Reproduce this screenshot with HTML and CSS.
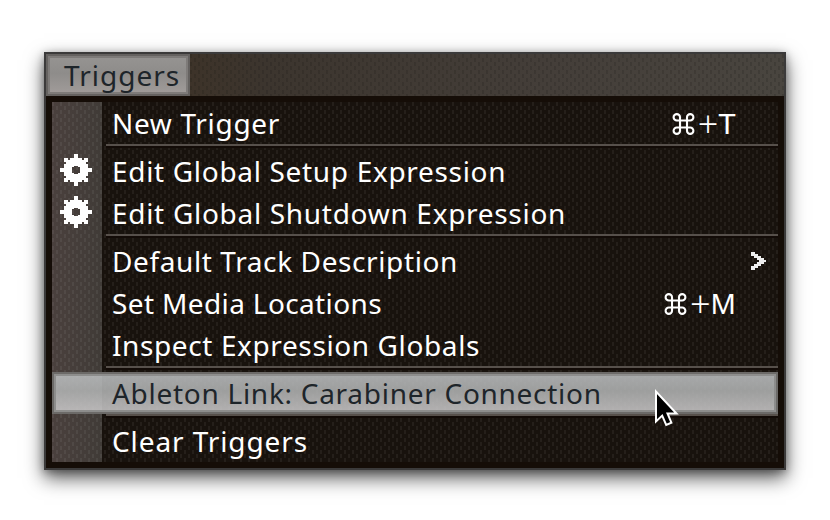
FILE: index.html
```html
<!DOCTYPE html>
<html lang="en">
<head>
<meta charset="utf-8">
<title>Triggers</title>
<link rel="stylesheet" href="styles.css">
</head>
<body>
<svg class="defs" width="0" height="0" aria-hidden="true">
  <symbol id="gear" viewBox="0 0 32 32">
    <path fill="#fff" fill-rule="evenodd" d="M14 0h4v4h4v2h2V4h4v4h-2v2h2v4h4v4h-4v4h-2v2h2v4h-4v-2h-2v2h-4v4h-4v-4h-4v-2H8v2H4v-4h2v-2H4v-4H0v-4h4v-4h2V8H4V4h4v2h2V4h4zM14 12v1h-2v6h2v1h4v-1h2v-6h-2v-1z"/>
  </symbol>
</svg>
<main class="window">
  <header class="bar"><div class="tab"><span class="tab-text">Triggers</span></div></header>
  <div class="menu">
    <div class="row"><span class="label l1">New Trigger</span><span class="key"><svg class="cmd" viewBox="0 0 22 22"><path d="M7.500 7.500V4.300a3.200 3.200 0 1 0-3.200 3.200h13.400a3.200 3.200 0 1 0-3.200-3.200v13.400a3.200 3.200 0 1 0 3.200-3.200H4.300a3.200 3.200 0 1 0 3.200 3.200z"/></svg><span class="plus">+</span><span class="wide">T</span></span></div>
    <div class="sep"></div>
    <div class="row"><svg class="gear"><use href="#gear"/></svg><span class="label l2">Edit Global Setup Expression</span></div>
    <div class="row"><svg class="gear"><use href="#gear"/></svg><span class="label l3">Edit Global Shutdown Expression</span></div>
    <div class="sep"></div>
    <div class="row"><span class="label l4">Default Track Description</span><svg class="arrow" viewBox="0 0 16 20"><path d="M1 1h4v2h3v2h3v2h3v2h2v2h-2v2h-3v2H8v2H5v2H1v-4h3v-2h3v-2h2V9H7V7H4V5H1z"/></svg></div>
    <div class="row"><span class="label l5">Set Media Locations</span><span class="key"><svg class="cmd" viewBox="0 0 22 22"><path d="M7.500 7.500V4.300a3.200 3.200 0 1 0-3.200 3.200h13.400a3.200 3.200 0 1 0-3.200-3.200v13.400a3.200 3.200 0 1 0 3.200-3.200H4.300a3.200 3.200 0 1 0 3.200 3.200z"/></svg><span class="plus">+</span>M</span></div>
    <div class="row"><span class="label l6">Inspect Expression Globals</span></div>
    <div class="sep"></div>
    <div class="row active"><span class="label l7">Ableton Link: Carabiner Connection</span></div>
    <div class="sep"></div>
    <div class="row"><span class="label l8">Clear Triggers</span></div>
  </div>
</main>
<svg class="cursor" viewBox="0 0 28 40"><path d="M2 3.500v30l6.200-5.900 4 9.300 5.200-2.200-3.900-9.200H22.500z" fill="#000" stroke="#fff" stroke-width="2"/></svg>
</body>
</html>
```
FILE: styles.css
```css
* { box-sizing: border-box; }
body {
  margin: 0;
  height: 520px;
  padding: 52px 44px 50px;
  background: #fff;
  overflow: hidden;
  font: 28px/42px "Noto Sans", "Open Sans", sans-serif;
  color: #fff;
}
.defs { position: absolute; }
.window {
  width: 742px;
  height: 418px;
  border: 2px solid #3b3a3a;
  box-shadow: 0 8px 18px rgba(0,0,0,.65), 0 2px 8px rgba(0,0,0,.3);
}
.bar {
  height: 42px;
  background:
    conic-gradient(from 0deg at 2px 4px, transparent 75%, rgba(20,18,15,.16) 0) 0 0 / 8px 8px,
    conic-gradient(from 0deg at 2px 4px, transparent 75%, rgba(20,18,15,.16) 0) 4px 4px / 8px 8px,
    linear-gradient(90deg, #3d3329 144px, #3c352e 220px, #443e39 500px, #49453f);
}
.tab {
  width: 144px;
  height: 42px;
  border: 2px solid #656260;
  box-shadow: inset 0 0 0 2px #7e7b79;
  background: linear-gradient(#969492, #8e8c8a 45%, #a19c9a);
  color: #1e252a;
  padding-left: 16px;
}
.tab-text { display: block; line-height: 38px; letter-spacing: 1px; white-space: nowrap; }
.menu {
  height: 372px;
  border: 6px solid #150d07;
  background:
    conic-gradient(from 0deg at 2px 4px, transparent 75%, rgba(255,255,255,.055) 0) 0 0 / 8px 8px,
    conic-gradient(from 0deg at 2px 4px, transparent 75%, rgba(255,255,255,.055) 0) 4px 4px / 8px 8px,
    linear-gradient(90deg, #4a403d, #403b37) 0 0 / 50px 100% no-repeat,
    #18120d;
  background-origin: padding-box;
  background-clip: padding-box;
}
.row {
  height: 42px;
  display: grid;
  grid-template-columns: 60px 1fr auto;
  align-items: center;
  padding-right: 42px;
  white-space: nowrap;
}
.label { grid-column: 2; grid-row: 1; height: 42px; line-height: 42px; }
.l1, .l2 { letter-spacing: .68px; }
.l3 { letter-spacing: .7px; }
.l7 { letter-spacing: .72px; }
.l4, .l6 { letter-spacing: .61px; }
.l5 { letter-spacing: .37px; }
.l8 { letter-spacing: .9px; }
.gear { grid-column: 1; grid-row: 1; width: 32px; height: 32px; margin-left: 8px; margin-top: -2px; }
.key { grid-column: 3; display: flex; align-items: center; height: 42px; line-height: 42px; }
.plus { font-size: 36px; font-weight: 300; line-height: 36px; padding-top: 1px; }
.wide { transform: scaleX(1.1); transform-origin: right; margin-left: 2px; }
.cmd { width: 23px; height: 22px; margin: 1px 3px 0 0; fill: none; stroke: #fff; stroke-width: 2.1; }
.arrow { grid-column: 3; width: 16px; height: 20px; fill: #eee; margin: 0 -30px 0 14px; }
.sep { height: 6px; margin-left: 54px; background: linear-gradient(#57504b 2px, #130b07 2px 4px, transparent 4px); }
.active {
  background: linear-gradient(rgba(190,193,195,.87), rgba(177,179,179,.87) 45%, rgba(205,203,204,.87));
  box-shadow: inset 0 0 0 2px #6c6a68, inset 0 0 0 4px #8d8d8c;
  color: #1e252a;
}
.cursor { position: absolute; left: 654px; top: 388px; width: 28px; height: 40px; }
```
